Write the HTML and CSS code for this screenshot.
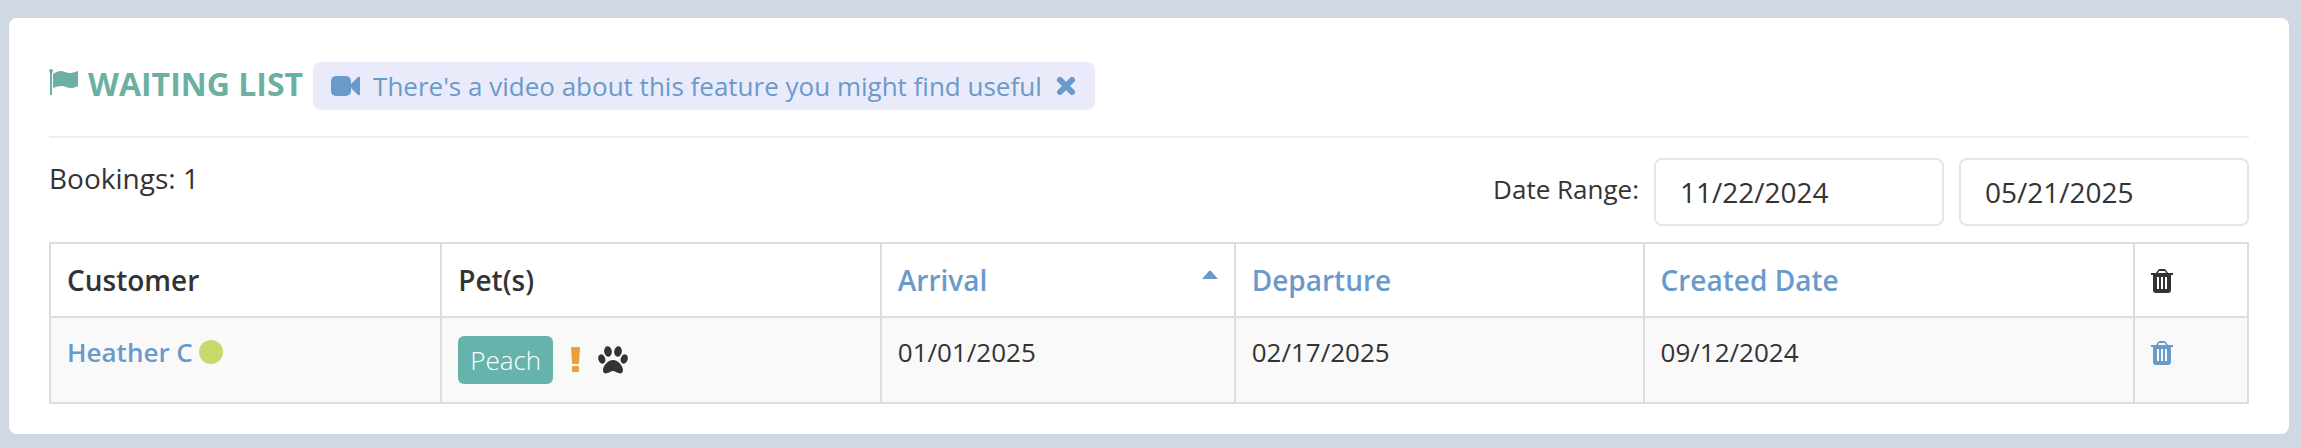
FILE: index.html
```html
<!DOCTYPE html>
<html lang="en">
<head>
    <meta charset="UTF-8">
    <title>Waiting List</title>
    <link rel="stylesheet" href="styles.css">
</head>
<body>

<div class="card">
    <div class="header">
        <h1 class="title">
            <svg class="icon-flag" viewBox="0 0 29 26" aria-hidden="true">
                <circle cx="2" cy="2" r="2"/>
                <path d="M1 2h2v24H1z"/>
                <path d="M4 5C8 2 12 1 16 3c4 2 8 1 13-1v15c-4 2-8 3-12 1-4-2-8-1-13 1z"/>
            </svg>
            WAITING LIST
        </h1>
        <div class="video-tip">
            <a href="#" class="video-link">
                <svg class="icon-video" viewBox="0 0 29 20" aria-hidden="true">
                    <rect width="20" height="20" rx="5"/>
                    <path d="M20 8l7-7q2-1 2 1v16q0 2-2 1l-7-7z"/>
                </svg>
                There's a video about this feature you might find useful
            </a>
            <button type="button" class="close" aria-label="Close">
                <svg viewBox="0 0 18 18" aria-hidden="true"><path d="M3 3l12 12M15 3L3 15"/></svg>
            </button>
        </div>
    </div>

    <div class="toolbar">
        <div class="count">Bookings: 1</div>
        <div class="range">
            <label for="dateFrom">Date Range:</label>
            <input type="text" id="dateFrom" value="11/22/2024">
            <input type="text" id="dateTo" value="05/21/2025" aria-label="Date range end">
        </div>
    </div>

    <table class="bookings">
        <colgroup>
            <col class="col-customer">
            <col class="col-pets">
            <col class="col-arrival">
            <col class="col-departure">
            <col class="col-created">
            <col class="col-delete">
        </colgroup>
        <thead>
            <tr>
                <th>Customer</th>
                <th>Pet(s)</th>
                <th>
                    <a href="#" class="sorted">Arrival
                        <svg class="icon-sort" viewBox="0 0 16 9" aria-hidden="true"><path d="M0 9l7-8q1-1 2 0l7 8z"/></svg>
                    </a>
                </th>
                <th><a href="#">Departure</a></th>
                <th><a href="#">Created Date</a></th>
                <th>
                    <svg class="icon-trash" viewBox="0 0 22 24" role="img" aria-label="Delete">
                        <path fill-rule="evenodd" d="M0 4h5l2-3q1-1 2-1h4q1 0 2 1l2 3h5v2h-2v15q0 3-3 3H5q-3 0-3-3V6H0zM7 4h8l-1-2H8zM6 8v12h2V8zM10 8v12h2V8zM14 8v12h2V8z"/>
                    </svg>
                </th>
            </tr>
        </thead>
        <tbody>
            <tr>
                <td><a href="#" class="customer">Heather C <span class="dot"></span></a></td>
                <td>
                    <div class="pets">
                        <a href="#" class="pet">Peach</a>
                        <svg class="icon-alert" viewBox="0 0 9 26" aria-hidden="true">
                            <path d="M1 0h7q1 0 1 1L8 16q0 1-1 1H2q-1 0-1-1L0 1q0-1 1-1z"/>
                            <rect x="1" y="19" width="7" height="6" rx="1"/>
                        </svg>
                        <svg class="icon-paw" viewBox="0 0 30 28" aria-hidden="true">
                            <ellipse cx="10" cy="5.500" rx="3.800" ry="5.300" transform="rotate(-8 10 5.500)"/>
                            <ellipse cx="20" cy="5.500" rx="3.800" ry="5.300" transform="rotate(8 20 5.500)"/>
                            <ellipse cx="3.800" cy="13" rx="3.500" ry="4.800" transform="rotate(-18 3.800 13)"/>
                            <ellipse cx="26.200" cy="13" rx="3.500" ry="4.800" transform="rotate(18 26.200 13)"/>
                            <path d="M15 14c5 0 10 6 10 10 0 3-2 4-4 3-2 0-4-2-6-2s-4 2-6 2c-2 1-4 0-4-3 0-4 5-10 10-10z"/>
                        </svg>
                    </div>
                </td>
                <td>01/01/2025</td>
                <td>02/17/2025</td>
                <td>09/12/2024</td>
                <td>
                    <button type="button" class="delete" aria-label="Delete booking">
                        <svg class="icon-trash" viewBox="0 0 22 24" aria-hidden="true">
                            <path fill-rule="evenodd" d="M0 4h5l2-3q1-1 2-1h4q1 0 2 1l2 3h5v2h-2v15q0 3-3 3H5q-3 0-3-3V6H0zM7 4h8l-1-2H8zM6 8v12h2V8zM10 8v12h2V8zM14 8v12h2V8z"/>
                        </svg>
                    </button>
                </td>
            </tr>
        </tbody>
    </table>
</div>

</body>
</html>
```

FILE: styles.css
```css
* {
    box-sizing: border-box;
}
body {
    margin: 0;
    padding: 18px 13px 14px 9px;
    background-color: #d0d8e4;
    color: #333;
    font-family: "Open Sans", sans-serif;
    font-size: 26px;
    line-height: 36px;
}
a {
    color: #6a9aca;
    text-decoration: none;
}
a:hover {
    text-decoration: underline;
}
svg {
    display: block;
    flex: none;
    fill: currentColor;
}
button {
    display: block;
    padding: 0;
    border: none;
    background: none;
    color: #6a9aca;
    cursor: pointer;
}
.card {
    padding: 44px 40px 30px;
    border-radius: 8px;
    background-color: white;
}
.header {
    display: flex;
    align-items: flex-start;
    gap: 10px;
    padding-bottom: 26px;
    border-bottom: 2px solid #eee;
}
.title {
    display: flex;
    gap: 10px;
    margin: 0;
    color: #6bb0a2;
    font-size: 32px;
    line-height: 44px;
    font-weight: 700;
}
.icon-flag {
    width: 29px;
    height: 26px;
    margin-top: 7px;
}
.video-tip {
    display: flex;
    align-items: center;
    gap: 15px;
    height: 48px;
    padding: 0 20px 0 18px;
    border-radius: 8px;
    background-color: #e9ebfa;
}
.video-link {
    display: flex;
    align-items: center;
    gap: 13px;
}
.icon-video {
    width: 29px;
    height: 20px;
}
.close svg {
    width: 18px;
    height: 18px;
    stroke: currentColor;
    stroke-width: 6;
    stroke-linecap: round;
}
.toolbar {
    display: flex;
    justify-content: space-between;
    align-items: flex-start;
    padding: 20px 0 16px;
}
.count {
    padding-top: 2px;
    font-size: 28px;
}
.range {
    display: flex;
    align-items: center;
    gap: 15px;
}
.range label {
    padding-bottom: 6px;
}
.range input {
    width: 290px;
    height: 68px;
    padding: 0 24px;
    border: 2px solid #e5e5e5;
    border-radius: 8px;
    background-color: white;
    color: #333;
    font-family: inherit;
    font-size: 28px;
}
.bookings {
    width: 100%;
    table-layout: fixed;
    border-collapse: collapse;
}
.bookings th,
.bookings td {
    padding: 16px;
    border: 2px solid #ddd;
    text-align: left;
    vertical-align: top;
}
.bookings th {
    padding: 18px 16px;
    font-size: 28px;
    font-weight: 600;
}
.bookings td {
    background-color: #f9f9f9;
}
.col-customer {
    width: 17.8%;
}
.col-pets {
    width: 20%;
}
.col-arrival {
    width: 16.1%;
}
.col-departure {
    width: 18.6%;
}
.col-created {
    width: 22.3%;
}
.col-delete {
    width: 5.2%;
}
.sorted {
    display: flex;
    justify-content: space-between;
}
.icon-sort {
    width: 16px;
    height: 9px;
    margin-top: 8px;
}
.icon-trash {
    width: 22px;
    height: 24px;
    margin-top: 7px;
}
.customer {
    display: flex;
    align-items: center;
    gap: 6px;
    font-weight: 600;
}
.dot {
    width: 24px;
    height: 24px;
    border-radius: 50%;
    background-color: #c6da6b;
}
.pets {
    display: flex;
    align-items: center;
    padding: 2px 0;
}
.pet {
    padding: 6px 12px;
    border-radius: 6px;
    background-color: #66b3ac;
    color: white;
    font-weight: 300;
}
.icon-alert {
    width: 9px;
    height: 26px;
    margin-left: 18px;
    color: #e8a13c;
}
.icon-paw {
    width: 30px;
    height: 28px;
    margin-left: 18px;
}
```
